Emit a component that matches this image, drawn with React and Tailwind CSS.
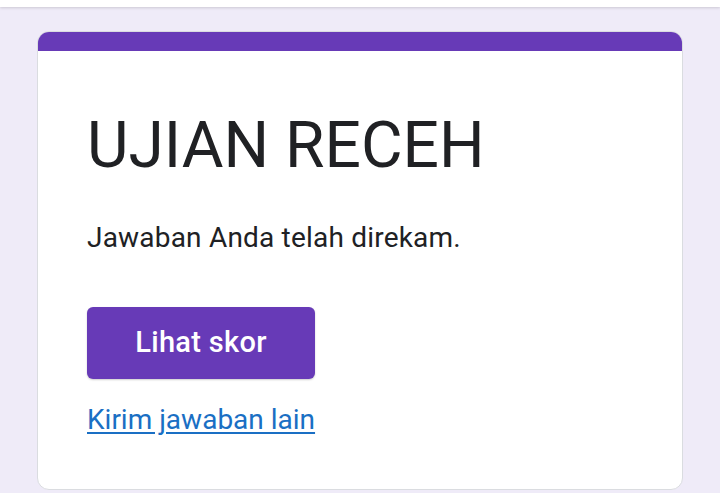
export default function App() {
    return (
        <div className="w-[720px] h-[493px] overflow-hidden bg-[#efebf8]" style={{ fontFamily: "Roboto, 'Noto Sans', sans-serif" }}>
            <div className="h-[7px] bg-white shadow-[0_1px_3px_rgba(0,0,0,0.15)]"></div>
            <div className="px-[37px] pt-[24px]">
                <div className="rounded-[12px] border border-[#dadce0] bg-white overflow-hidden h-[459px]">
                    <div className="h-[19px] bg-[#673ab7]"></div>
                    <div className="pl-[49px] pt-[55px]">
                        <h1 className="text-[64px] leading-[80px] text-[#202124] font-normal">
                            UJIAN RECEH
                        </h1>
                        <p className="mt-[35px] text-[28px] leading-[34px] text-[#202124] tracking-[0.2px]">
                            Jawaban Anda telah direkam.
                        </p>
                        <button className="mt-[52px] w-[228px] h-[72px] rounded-[6px] bg-[#673ab7] text-white text-[29px] font-medium tracking-[0.3px] shadow-[0_1px_2px_rgba(0,0,0,0.2)]">
                            Lihat skor
                        </button>
                        <div className="mt-[24px] leading-[34px]">
                            <a href="#" className="text-[28px] text-[#1a6fc4] underline underline-offset-[3px]">
                                Kirim jawaban lain
                            </a>
                        </div>
                    </div>
                </div>
            </div>
        </div>
    );
}
